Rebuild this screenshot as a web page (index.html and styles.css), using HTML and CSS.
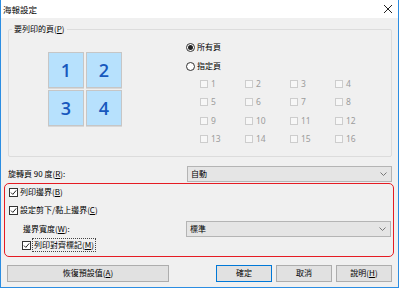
FILE: index.html
```html
<!DOCTYPE html>
<html lang="zh-Hant">
<head>
  <meta charset="UTF-8" />
  <title>海報設定</title>
  <link rel="stylesheet" href="styles.css">
</head>
<body>
  <div class="window">
    <div class="titlebar">
      <span class="title">海報設定</span>
      <svg class="close" width="10" height="10" viewBox="0 0 10 10">
        <path d="M1 1 L9 9 M9 1 L1 9" stroke="#222" stroke-width="1" fill="none" />
      </svg>
    </div>

    <div class="content">
      <fieldset class="group">
        <legend>要列印的頁(<u>P</u>)</legend>
        <div class="group-body">
          <div class="tiles">
            <div class="tile">1</div>
            <div class="tile">2</div>
            <div class="tile">3</div>
            <div class="tile">4</div>
          </div>
          <div class="pages">
            <div class="radio-row"><span class="radio on"></span><span>所有頁</span></div>
            <div class="radio-row second"><span class="radio"></span><span>指定頁</span></div>
            <div class="page-grid">
              <span class="pg"><span class="pbox"></span>1</span>
              <span class="pg"><span class="pbox"></span>2</span>
              <span class="pg"><span class="pbox"></span>3</span>
              <span class="pg"><span class="pbox"></span>4</span>
              <span class="pg"><span class="pbox"></span>5</span>
              <span class="pg"><span class="pbox"></span>6</span>
              <span class="pg"><span class="pbox"></span>7</span>
              <span class="pg"><span class="pbox"></span>8</span>
              <span class="pg"><span class="pbox"></span>9</span>
              <span class="pg"><span class="pbox"></span>10</span>
              <span class="pg"><span class="pbox"></span>11</span>
              <span class="pg"><span class="pbox"></span>12</span>
              <span class="pg"><span class="pbox"></span>13</span>
              <span class="pg"><span class="pbox"></span>14</span>
              <span class="pg"><span class="pbox"></span>15</span>
              <span class="pg"><span class="pbox"></span>16</span>
            </div>
          </div>
        </div>
      </fieldset>

      <div class="row rotate-row">
        <span class="row-label">旋轉頁 90 度(<u>R</u>):</span>
        <div class="select"><span>自動</span>
          <svg class="chev" width="7" height="4" viewBox="0 0 7 4"><path d="M0.5 0.5 L3.5 3.5 L6.5 0.5" stroke="#777" fill="none" /></svg>
        </div>
      </div>

      <div class="highlight">
        <div class="check-row">
          <svg class="check" width="9" height="9" viewBox="0 0 9 9"><rect x="0.5" y="0.5" width="8" height="8" fill="#fff" stroke="#333" /><path d="M2 4.6 L3.8 6.4 L7.2 2.4" stroke="#222" fill="none" /></svg>
          <span>列印邊界(<u>B</u>)</span>
        </div>
        <div class="check-row gap">
          <svg class="check" width="9" height="9" viewBox="0 0 9 9"><rect x="0.5" y="0.5" width="8" height="8" fill="#fff" stroke="#333" /><path d="M2 4.6 L3.8 6.4 L7.2 2.4" stroke="#222" fill="none" /></svg>
          <span>設定剪下/黏上邊界(<u>C</u>)</span>
        </div>
        <div class="row width-row">
          <span class="row-label sub">邊界寬度(<u>W</u>):</span>
          <div class="select"><span>標準</span>
            <svg class="chev" width="7" height="4" viewBox="0 0 7 4"><path d="M0.5 0.5 L3.5 3.5 L6.5 0.5" stroke="#777" fill="none" /></svg>
          </div>
        </div>
        <div class="check-row sub marks">
          <svg class="check" width="9" height="9" viewBox="0 0 9 9"><rect x="0.5" y="0.5" width="8" height="8" fill="#fff" stroke="#333" /><path d="M2 4.6 L3.8 6.4 L7.2 2.4" stroke="#222" fill="none" /></svg>
          <span class="focus">列印對齊標記(<u>M</u>)</span>
        </div>
      </div>

      <div class="buttons">
        <button class="btn reset">恢復預設值(<u>A</u>)</button>
        <button class="btn small default">確定</button>
        <button class="btn small">取消</button>
        <button class="btn small">說明(<u>H</u>)</button>
      </div>
    </div>
  </div>
</body>
</html>
```

FILE: styles.css
```css
* {
  margin: 0;
  padding: 0;
  box-sizing: border-box;
}

body {
  font-family: "Noto Sans CJK TC", "Noto Sans", sans-serif;
  font-size: 8px;
  color: #000;
  background: #fff;
}

u {
  text-decoration: underline;
}

.window {
  width: 399px;
  height: 288px;
  background: #f0f0f0;
  border: 1px solid #2b8de2;
  border-top: none;
}

.titlebar {
  height: 18px;
  background: #fff;
  display: flex;
  align-items: center;
  justify-content: space-between;
  padding: 0 5px 0 2px;
}

.title {
  font-size: 8.5px;
  line-height: 12px;
}

.close {
  display: block;
}

.content {
  padding: 5px 6px 0 7px;
}

/* page group */

.group {
  border: 1px solid #dcdcdc;
  border-radius: 2px;
}

.group legend {
  margin-left: 3px;
  padding: 0 2px;
  line-height: 12px;
}

.group-body {
  height: 121px;
  display: flex;
  padding-left: 39px;
}

.tiles {
  margin-top: 17px;
  display: grid;
  grid-template-columns: 36px 36px;
  grid-auto-rows: 36px;
  gap: 2px;
  align-self: flex-start;
}

.tile {
  background: #b7e1fd;
  border: 1px solid #c6c6c6;
  box-shadow: 0 1px 0 #d8d8d8;
  color: #1758bd;
  font-family: "Open Sans", sans-serif;
  font-weight: 600;
  font-size: 18px;
  display: flex;
  align-items: center;
  justify-content: center;
}

.pages {
  margin-left: 64px;
  padding-top: 6px;
}

.radio-row {
  display: flex;
  align-items: center;
  gap: 2px;
  height: 12px;
  line-height: 12px;
}

.radio-row.second {
  margin-top: 7px;
}

.radio {
  width: 9px;
  height: 9px;
  border: 1px solid #333;
  border-radius: 50%;
  background: #fff;
  display: flex;
  align-items: center;
  justify-content: center;
}

.radio.on::after {
  content: '';
  width: 5px;
  height: 5px;
  border-radius: 50%;
  background: #222;
}

.page-grid {
  margin: 6px 0 0 14px;
  display: grid;
  grid-template-columns: repeat(4, 45px);
  grid-auto-rows: 12px;
  row-gap: 6.3px;
}

.pg {
  display: flex;
  align-items: center;
  gap: 3px;
  color: #9c9c9c;
  font-family: "Noto Sans", sans-serif;
  font-size: 8.5px;
  line-height: 12px;
}

.pbox {
  width: 8px;
  height: 8px;
  border: 1px solid #cdcdcd;
  background: #f7f7f7;
}

/* rows */

.row {
  display: flex;
  align-items: center;
  justify-content: space-between;
}

.row-label {
  line-height: 12px;
}

.rotate-row {
  margin-top: 9px;
}

.select {
  width: 205px;
  height: 16px;
  background: #e5e5e5;
  border: 1px solid #b4b4b4;
  display: flex;
  align-items: center;
  justify-content: space-between;
  padding: 0 4px 0 3px;
  line-height: 12px;
}

.chev {
  display: block;
}

/* red annotation */

.highlight {
  margin: 1px -2px 0 -4px;
  border: 1.5px solid #e51b23;
  border-radius: 5px;
  padding: 2px 2px 4.5px 4px;
}

.check-row {
  display: flex;
  align-items: center;
  gap: 2px;
  height: 12px;
  line-height: 12px;
}

.check {
  display: block;
}

.check-row.gap {
  margin-top: 6px;
}

.width-row {
  margin-top: 5px;
}

.row-label.sub {
  padding-left: 14px;
}

.check-row.sub {
  padding-left: 13px;
  margin-top: 2px;
}

.focus {
  outline: 1px dotted #444;
  outline-offset: 0;
  padding: 0 1px;
}

/* buttons */

.buttons {
  margin: 8px 0 0 -1px;
  display: flex;
  gap: 4px;
}

.btn {
  height: 17px;
  background: #e1e1e1;
  border: 1px solid #adadad;
  font-family: inherit;
  font-size: 8px;
  color: #000;
  line-height: 12px;
}

.btn.reset {
  width: 162px;
  margin-right: auto;
}

.btn.small {
  width: 56px;
}

.btn.default {
  border-color: #0078d7;
}
```
